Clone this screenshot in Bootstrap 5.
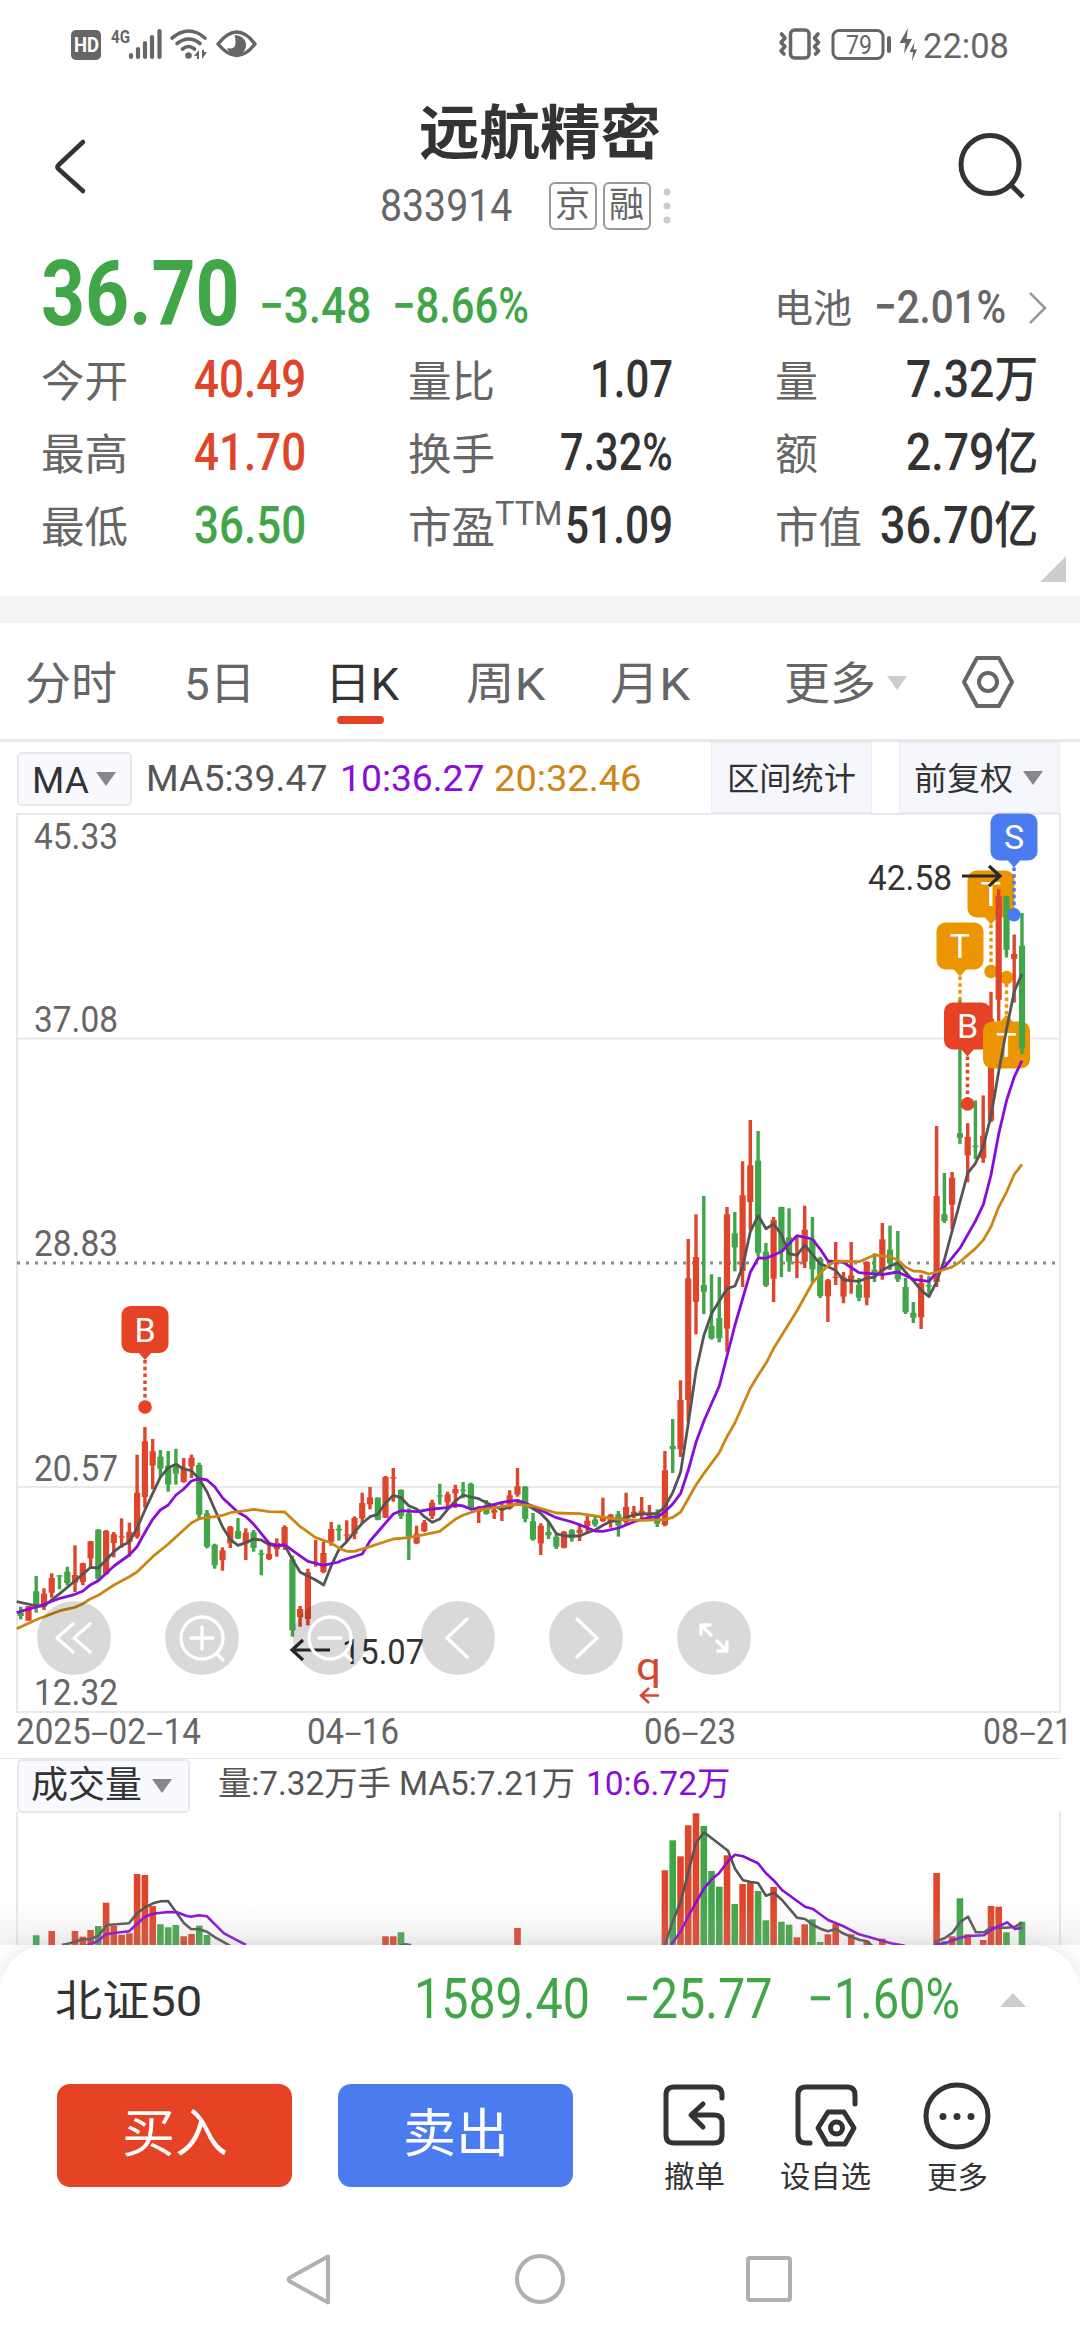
<!DOCTYPE html>
<html lang="zh-CN">
<head>
<meta charset="utf-8">
<title>远航精密 833914</title>
<link href="https://cdn.jsdelivr.net/npm/bootstrap@5.3.0/dist/css/bootstrap.min.css" rel="stylesheet">
<style>
:root{--up:#df452a;--down:#41a648;--ink:#333;--sub:#666;--violet:#8a0cd6;--gold:#cc8614}
body{width:1080px;height:2340px;overflow:hidden;background:#fff;color:var(--ink);font-family:Roboto,"Noto Sans CJK SC",sans-serif}
svg{display:block;flex:none}
svg text{font-family:Roboto,"Noto Sans CJK SC",sans-serif}
.fit{display:inline-block;white-space:nowrap;line-height:1;flex:none}
.fit>span{display:inline-block;transform-origin:0 50%}
.phone-col{height:2340px}
.status-row{height:88px;padding:15px 50px 0 60px}
.title-bar{height:162px;padding:0 50px 0 52px}
.stock-name{font-size:59px;font-weight:700;margin-left:30px}
.stock-code{font-size:44px;color:var(--sub)}
.tag-box{width:48px;height:48px;border:2px solid #999;border-radius:6px;color:var(--sub);font-size:35px}
.t-up{color:var(--up)}.t-down{color:var(--down)}.t-sub{color:var(--sub)}
.price-row{height:96px;padding:0 31px 0 41px}
.last-price{font-size:90px;font-weight:700;margin-top:-6px}
.delta{font-size:50px;font-weight:500}
.sector{font-size:39px}
.quote-grid{height:250px;padding:0 42px 0 41px;position:relative}
.quote-line{height:73px}
.q-label{font-size:43px;color:var(--sub)}
.q-val{font-size:51px;font-weight:500;margin-top:-6px}
.q-val .unit{font-size:50px}
.cell-a{width:265px}.cell-b{width:265px}.cell-c{width:263px}
.fold-tip{position:absolute;right:14px;bottom:14px}
.band{height:27px;background:#f4f4f4}
.tab-row{height:119px;padding:7px 64px 0 25px;border-bottom:3px solid #e8e8e8;font-size:45px;color:var(--sub)}
.tab-on{color:var(--ink);position:relative}
.tab-on::after{content:"";position:absolute;left:12px;bottom:-17px;width:47px;height:8px;border-radius:4px;background:#e64225}
.ma-row{height:71px;padding-left:17px;padding-right:20px;font-size:37px;background:#fff}
.ma-row .fit{padding-top:2px}
.drop-box{border:2px solid #e8e8ea;border-radius:5px;background:#f9faff;height:54px}
.flat-box{background:#f6f7fc;border:1px solid #ececf2;height:71px;font-size:32px}
.vol-head{height:54px;padding-left:17px;margin:0 20px 0 0}
.chart-stack{height:1132px}
.sheet{height:395px;border-radius:48px 48px 0 0;background:#fff;position:relative;box-shadow:0 0 22px rgba(0,0,0,.10)}
.index-row{height:110px;padding:0 54px 0 55px}
.index-row .t-down{font-size:55px;margin-top:-2px}
.act-row{height:160px;padding:0 89px 0 57px}
.btn-trade{width:235px;height:103px;border:0;border-radius:13px;color:#fff;font-size:52px;padding:0}
.btn-buy{background:#e64225}.btn-sell{background:#4a7cf0}
.tool{font-size:30px;padding-top:4px}
.nav-row{height:125px;padding-top:36px}
</style>
<script src="https://cdn.jsdelivr.net/npm/bootstrap@5.3.0/dist/js/bootstrap.bundle.min.js"></script>
</head>
<body>
<main class="phone-col d-flex flex-column">

<div class="status-row d-flex justify-content-between align-items-start">
  <svg width="210" height="60" viewBox="0 0 210 60" fill="#666">
    <rect x="11" y="15" width="30" height="30" rx="5"/>
    <text x="14" y="37" font-size="19.5" font-weight="700" fill="#fff" textLength="25" lengthAdjust="spacingAndGlyphs">HD</text>
    <text x="51" y="27.500" font-size="19" font-weight="700" textLength="19" lengthAdjust="spacingAndGlyphs">4G</text>
    <g stroke="#666" stroke-width="4.200" stroke-linecap="round"><path d="M71 40v2M78 34v8M85 28v14M92 22v20M99.500 16v26"/></g>
    <g fill="none" stroke="#666" stroke-width="3.600" stroke-linecap="round"><path d="M112 23q17-14 33 0M117 28.500q12-9 23 0M122.500 34q6-5 12 0"/></g>
    <circle cx="128.500" cy="40.500" r="3.300"/><path d="M134 41l5-6v9h-2v-3zM142 35v9l5-7h-3v-2z"/>
    <path d="M158 29q19-24 37 0q-18 23-37 0z" fill="none" stroke="#666" stroke-width="3.500" stroke-linejoin="round"/>
    <path d="M174.500 20.500a9.800 9.800 0 1 1-7.600 12.500q7.500 2 8.600-4 .5-5-1-8.500z"/>
  </svg>
  <svg width="260" height="60" viewBox="0 0 260 60" fill="#666">
    <rect x="20.500" y="15" width="18.500" height="28" rx="4" fill="none" stroke="#666" stroke-width="3.500"/>
    <path d="M11.500 19l3.500 4-4 4.500 4 4-4 4.500 3 3M48 19l-3.500 4 4 4.500-4 4 4 4.500-3 3" fill="none" stroke="#666" stroke-width="3.600" stroke-linejoin="round" stroke-linecap="round"/>
    <rect x="63" y="15.500" width="50" height="28" rx="6" fill="none" stroke="#666" stroke-width="3"/>
    <rect x="117" y="21" width="4" height="17" rx="2"/>
    <text x="76" y="38.500" font-size="25" textLength="26" lengthAdjust="spacingAndGlyphs">79</text>
    <path d="M138 13l-8.500 15h6l-1.500 11 8-15h-5.500zM144.500 27l-5 10h3.500l-1 9 5-11.500h-3.500z"/>
    <text x="153" y="42.500" font-size="35" textLength="86" lengthAdjust="spacingAndGlyphs">22:08</text>
  </svg>
</div>

<header class="title-bar d-flex align-items-start justify-content-between">
  <svg width="44" height="162" viewBox="52 88 44 162" fill="none" stroke="#333" stroke-width="4.500" stroke-linecap="round" stroke-linejoin="round"><path d="M83 142L58.500 165q-2 2 0 4L83 191"/></svg>
  <div class="d-flex flex-column align-items-center">
    <div class="stock-name fit mt-3" data-w="242"><span>远航精密</span></div>
    <div class="d-flex align-items-center" style="margin-top:19px">
      <span class="stock-code fit" data-w="132"><span>833914</span></span>
      <span class="tag-box d-flex align-items-center justify-content-center" style="margin-left:37px">京</span>
      <span class="tag-box d-flex align-items-center justify-content-center" style="margin-left:6px">融</span>
      <svg width="8" height="36" viewBox="0 0 8 36" fill="#ccc" style="margin-left:12px"><circle cx="4" cy="4" r="3.500"/><circle cx="4" cy="18" r="3.500"/><circle cx="4" cy="32" r="3.500"/></svg>
    </div>
  </div>
  <svg width="76" height="162" viewBox="954 88 76 162" fill="none" stroke="#333" stroke-width="5"><circle cx="990" cy="164.500" r="29"/><path d="M1010 184l13 13"/></svg>
</header>

<div class="price-row d-flex align-items-center">
  <span class="last-price fit t-down" data-w="199"><span>36.70</span></span>
  <span class="delta fit t-down" data-w="112" style="margin:15px 0 0 19px"><span>−3.48</span></span>
  <span class="delta fit t-down" data-w="137" style="margin:15px 0 0 21px"><span>−8.66%</span></span>
  <span class="sector fit t-sub ms-auto" data-w="78" style="margin-top:22px"><span>电池</span></span>
  <span class="delta fit t-sub" data-w="132" style="margin:16px 0 0 22px;font-size:47px"><span>−2.01%</span></span>
  <svg width="22" height="36" viewBox="0 0 22 36" fill="none" stroke="#999" stroke-width="2.500" style="margin:19px 0 0 21px"><path d="M3 3l15 15L3 33"/></svg>
</div>

<section class="quote-grid">
  <div class="quote-line d-flex justify-content-between align-items-center">
    <div class="cell-a d-flex justify-content-between align-items-center"><span class="q-label fit" data-w="87"><span>今开</span></span><span class="q-val fit t-up" data-w="112"><span>40.49</span></span></div>
    <div class="cell-b d-flex justify-content-between align-items-center"><span class="q-label fit" data-w="87"><span>量比</span></span><span class="q-val fit" data-w="83"><span>1.07</span></span></div>
    <div class="cell-c d-flex justify-content-between align-items-center"><span class="q-label fit" data-w="43"><span>量</span></span><span class="q-val fit" data-w="132"><span>7.32<span class="unit">万</span></span></span></div>
  </div>
  <div class="quote-line d-flex justify-content-between align-items-center">
    <div class="cell-a d-flex justify-content-between align-items-center"><span class="q-label fit" data-w="87"><span>最高</span></span><span class="q-val fit t-up" data-w="112"><span>41.70</span></span></div>
    <div class="cell-b d-flex justify-content-between align-items-center"><span class="q-label fit" data-w="87"><span>换手</span></span><span class="q-val fit" data-w="113"><span>7.32%</span></span></div>
    <div class="cell-c d-flex justify-content-between align-items-center"><span class="q-label fit" data-w="43"><span>额</span></span><span class="q-val fit" data-w="132"><span>2.79<span class="unit">亿</span></span></span></div>
  </div>
  <div class="quote-line d-flex justify-content-between align-items-center">
    <div class="cell-a d-flex justify-content-between align-items-center"><span class="q-label fit" data-w="87"><span>最低</span></span><span class="q-val fit t-down" data-w="112"><span>36.50</span></span></div>
    <div class="cell-b d-flex align-items-center"><span class="q-label fit" data-w="87"><span>市盈</span></span><span class="fit t-sub" data-w="68" style="font-size:34px;margin-bottom:31px"><span>TTM</span></span><span class="q-val fit ms-auto" data-w="108"><span>51.09</span></span></div>
    <div class="cell-c d-flex justify-content-between align-items-center"><span class="q-label fit" data-w="87"><span>市值</span></span><span class="q-val fit" data-w="158"><span>36.70<span class="unit">亿</span></span></span></div>
  </div>
  <svg class="fold-tip" width="26" height="26" viewBox="0 0 26 26" fill="#ccc"><path d="M26 0v26H0z"/></svg>
</section>

<div class="band"></div>

<nav class="tab-row d-flex align-items-center">
  <span class="fit" data-w="92"><span>分时</span></span>
  <span class="fit" data-w="71" style="margin-left:67px"><span>5日</span></span>
  <span class="fit tab-on" data-w="74" style="margin-left:70px"><span>日K</span></span>
  <span class="fit" data-w="79" style="margin-left:67px"><span>周K</span></span>
  <span class="fit" data-w="80" style="margin-left:65px"><span>月K</span></span>
  <span class="fit" data-w="92" style="margin-left:94px"><span>更多</span></span>
  <svg width="20" height="14" viewBox="0 0 20 14" fill="#ccc" style="margin:-3px 0 0 11px"><path d="M0 0h20l-10 14z"/></svg>
  <svg class="ms-auto" width="56" height="56" viewBox="0 0 56 56" fill="none" stroke="#666" stroke-width="4" style="margin-top:-5px"><path d="M17 4h22l13 24-13 24H17L4 28z" stroke-linejoin="round"/><circle cx="28" cy="28" r="9"/></svg>
</nav>

<div class="ma-row d-flex align-items-center">
  <div class="drop-box d-flex align-items-center" style="width:115px;padding-left:13px;margin-top:3px">
    <span class="fit" data-w="57"><span>MA</span></span>
    <svg width="20" height="14" viewBox="0 0 20 14" fill="#888" style="margin-left:7px"><path d="M0 0h20l-10 14z"/></svg>
  </div>
  <span class="fit" data-w="181" style="margin-left:14px;color:#555"><span>MA5:39.47</span></span>
  <span class="fit" data-w="144" style="margin-left:13px;color:var(--violet)"><span>10:36.27</span></span>
  <span class="fit" data-w="147" style="margin-left:10px;color:var(--gold)"><span>20:32.46</span></span>
  <div class="flat-box d-flex align-items-center justify-content-center ms-auto" style="width:161px"><span class="fit" data-w="129"><span>区间统计</span></span></div>
  <div class="flat-box d-flex align-items-center" style="width:161px;margin-left:27px;padding-left:14px"><span class="fit" data-w="99"><span>前复权</span></span>
    <svg width="20" height="14" viewBox="0 0 20 14" fill="#888" style="margin-left:10px"><path d="M0 0h20l-10 14z"/></svg></div>
</div>

<div class="chart-stack d-flex flex-column">
<svg id="kline" width="1080" height="945" viewBox="0 813 1080 945">
  <g fill="none" stroke="#e9e9e9" stroke-width="2"><rect x="17" y="814" width="1043" height="898"/><path d="M17 1038.500H1060M17 1487H1060"/></g>
  <path d="M17 1263H1060" stroke="#8c8c8c" stroke-width="3" stroke-dasharray="3 6"/>
  <g font-size="36" fill="#666">
    <text x="34" y="849" textLength="84" lengthAdjust="spacingAndGlyphs">45.33</text>
    <text x="34" y="1032" textLength="84" lengthAdjust="spacingAndGlyphs">37.08</text>
    <text x="34" y="1256" textLength="84" lengthAdjust="spacingAndGlyphs">28.83</text>
    <text x="34" y="1481" textLength="84" lengthAdjust="spacingAndGlyphs">20.57</text>
    <text x="34" y="1705" textLength="84" lengthAdjust="spacingAndGlyphs">12.32</text>
    <text x="16" y="1744" textLength="185" lengthAdjust="spacingAndGlyphs">2025‒02‒14</text>
    <text x="307" y="1744" textLength="92" lengthAdjust="spacingAndGlyphs">04‒16</text>
    <text x="644" y="1744" textLength="92" lengthAdjust="spacingAndGlyphs">06‒23</text>
    <text x="983" y="1744" textLength="89" lengthAdjust="spacingAndGlyphs">08‒21</text>
  </g>
  <g id="candlesBack"></g>
  <g id="markers" font-size="34" text-anchor="middle" fill="#fff"></g>
  <g id="candlesFront"></g>
  <g id="averages" fill="none" stroke-width="2.800" stroke-linejoin="round"></g>
  <g id="sellMarker" font-size="34" text-anchor="middle" fill="#fff"></g>
  <g fill="none" stroke="#2a2a2a" stroke-width="3.200"><path d="M962 876H999M989 866l11 10-11 10M330 1650H293M303 1640l-11 10 11 10"/></g>
  <g font-size="35" fill="#333"><text x="868" y="890" textLength="84" lengthAdjust="spacingAndGlyphs">42.58</text><text x="342" y="1664" textLength="82" lengthAdjust="spacingAndGlyphs">15.07</text></g>
  <text x="636" y="1680" font-size="39" fill="#d6472f" textLength="25" lengthAdjust="spacingAndGlyphs">q</text>
  <path d="M659 1695.500H641M649 1688l-8 7.500 8 7.500" fill="none" stroke="#d6472f" stroke-width="2.500"/>
  <g fill="#000" fill-opacity=".15"><circle cx="74" cy="1638" r="37"/><circle cx="202" cy="1638" r="37"/><circle cx="330" cy="1638" r="37"/><circle cx="458" cy="1638" r="37"/><circle cx="586" cy="1638" r="37"/><circle cx="714" cy="1638" r="37"/></g>
  <g fill="none" stroke="#fff" stroke-width="3.300" stroke-linecap="round" stroke-linejoin="round">
    <path d="M73 1624L57 1638l16 14M90 1624L74 1638l16 14"/>
    <circle cx="202" cy="1638" r="21"/><path d="M217 1654l6 6M191 1638h22M202 1627v22"/>
    <circle cx="330" cy="1638" r="21"/><path d="M345 1654l6 6M319 1638h22"/>
    <path d="M467 1619L447 1638l20 19M577 1619l20 19-20 19"/>
    <path d="M701 1634v-9h9M701 1625l10 10M727 1642v9h-9M727 1651l-10-10"/>
  </g>
</svg>

<div class="vol-head d-flex align-items-center" style="border-top:1px solid #e6e6e6">
  <div class="drop-box d-flex align-items-center" style="width:173px;padding-left:12px;font-size:37px">
    <span class="fit" data-w="111"><span>成交量</span></span>
    <svg width="20" height="14" viewBox="0 0 20 14" fill="#888" style="margin-left:10px"><path d="M0 0h20l-10 14z"/></svg>
  </div>
  <span class="fit" data-w="357" style="margin:-5px 0 0 28px;font-size:33px;color:#555"><span>量:7.32万手 MA5:7.21万</span></span>
  <span class="fit" data-w="144" style="margin:-5px 0 0 11px;font-size:33px;color:var(--violet)"><span>10:6.72万</span></span>
</div>
<svg id="volume" width="1080" height="133" viewBox="0 1812 1080 133">
  <defs><linearGradient id="fade" x1="0" y1="0" x2="0" y2="1"><stop offset="0" stop-color="#b7b7b7" stop-opacity="0"/><stop offset="1" stop-color="#b7b7b7" stop-opacity=".2"/></linearGradient></defs>
  <path d="M17 1812V1945M1060 1812V1945" stroke="#e9e9e9" stroke-width="2"/>
  <g id="volBars"></g>
  <g id="volLines" fill="none" stroke-width="2.600" stroke-linejoin="round"></g>
  <rect x="0" y="1902" width="1080" height="43" fill="url(#fade)"/>
</svg>
</div>

<section class="sheet">
  <div class="index-row d-flex align-items-center">
    <span class="fit" data-w="147" style="font-size:43px;margin-top:2px"><span>北证50</span></span>
    <span class="fit t-down ms-auto" data-w="176"><span>1589.40</span></span>
    <span class="fit t-down" data-w="150" style="margin-left:33px"><span>−25.77</span></span>
    <span class="fit t-down" data-w="153" style="margin-left:34px"><span>−1.60%</span></span>
    <svg width="26" height="14" viewBox="0 0 26 14" fill="#ccc" style="margin-left:40px"><path d="M0 14h26L13 0z"/></svg>
  </div>
  <div class="act-row d-flex align-items-center">
    <button class="btn btn-trade btn-buy"><span class="fit" data-w="106"><span>买入</span></span></button>
    <button class="btn btn-trade btn-sell" style="margin-left:46px"><span class="fit" data-w="106"><span>卖出</span></span></button>
    <div class="tool d-flex flex-column align-items-center" style="margin-left:88px">
      <svg width="66" height="66" viewBox="0 0 66 66" fill="none" stroke="#333" stroke-width="5" stroke-linecap="round" stroke-linejoin="round"><path d="M61 16v-3q0-8-8-8H13q-8 0-8 8v40q0 8 8 8h40q8 0 8-8V40q0-7-8-7H31M42 22L30 33l12 12"/></svg>
      <span class="fit" data-w="61" style="margin-top:14px"><span>撤单</span></span>
    </div>
    <div class="tool d-flex flex-column align-items-center" style="margin-left:53px">
      <svg width="66" height="66" viewBox="0 0 66 66" fill="none" stroke="#333" stroke-width="5" stroke-linecap="round" stroke-linejoin="round"><path d="M62 22v-9q0-8-8-8H13q-8 0-8 8v40q0 8 8 8h4M35 30h16l10 16-9 16H34l-9-16z"/><circle cx="43.500" cy="46" r="6"/></svg>
      <span class="fit" data-w="91" style="margin-top:14px"><span>设自选</span></span>
    </div>
    <div class="tool d-flex flex-column align-items-center ms-auto">
      <svg width="68" height="68" viewBox="0 0 68 68" fill="none" stroke="#333" stroke-width="5"><circle cx="34" cy="34" r="31"/><g fill="#333" stroke="none"><circle cx="20" cy="34.500" r="3.500"/><circle cx="34" cy="34.500" r="3.500"/><circle cx="48" cy="34.500" r="3.500"/></g></svg>
      <span class="fit" data-w="61" style="margin-top:13px"><span>更多</span></span>
    </div>
  </div>
  <div class="nav-row">
    <svg width="1080" height="56" viewBox="0 2251 1080 56" fill="none" stroke="#b0b0b0" stroke-width="4" stroke-linejoin="round"><path d="M328 2256.500v46L290 2281.500q-3-2 0-4z"/><circle cx="540" cy="2279" r="23"/><rect x="748" y="2258" width="42" height="42" rx="2"/></svg>
  </div>
</section>
</main>

<script>
const UP = '#df452a', DOWN = '#41a648', STEP = 7.762, X0 = 20.7;
const cx = i => X0 + STEP * i;
// Daily bars: direction, high, body top, body bottom, low; each block has its own origin and scale.
const blocks = [
 {y:1280, k:1/3, d:`g980 998 1008 1018|r978 978 1022 1022|g888 934 976 998|r925 941 980 990|r880 894 938 953|g886 886 890 928|g860 875 909 916|r796 885 908 936|r848 850 906 916|r783 784 835 860|g747 749 896 900|r750 753 882 885|r756 763 789 832|r715 769 772 803|r728 755 786 830|r524 638 770 776|r441 484 651 683|r477 514 557 628|g510 530 566 590|g513 557 614 635|g506 553 581 614|r534 563 606 608|r524 533 559 594|g548 555 704 716|g690 700 800 805|g791 794 856 866|r802 811 840 872|r738 740 790 804|g714 753 775 777|r745 758 790 840|g750 757 804 815|g809 820 824 886|r795 822 837 840|r775 789 808 830|r736 741 795 810|g827 838 1051 1070|r978 987 1012 1040|r866 877 1017 1036|r780 848 852 860|r785 819 876 880|r726 747 785 797|g734 746 751 782|r721 763 767 785|r709 714 762 778`},
 {y:1380, k:1/3, d:`r338 369 415 430|r321 352 373 388|g352 353 419 421|r288 291 413 414|r264 292 295 365|g328 330 408 417|g385 400 470 540|r437 461 490 492|r420 428 453 456|r359 368 408 417|g311 346 350 374|r335 343 367 382|r314 327 340 384|g306 329 333 355|g308 312 383 386|r378 384 396 429|g360 375 402 404|r375 390 398 417|r370 383 388 423|r331 346 385 389|r264 319 344 350|g318 320 416 427|g399 424 478 482|r430 437 490 525|g424 456 466 477|g462 470 500 507|r453 455 503 505|g447 451 475 485|r430 449 459 483|r407 422 438 456|g410 419 434 440|r353 413 423 426|r402 404 426 443|g393 403 437 470|r338 380 426 436|r378 395 403 414|r351 392 402 422|r375 402 408 418|g388 399 431 441|r213 271 435 439|g117 198 208 279`},
 {y:1080, k:1/3, d:`r901 960 1108 1131|r477 595 960 1026|r403 531 665 763|g348 615 635 702|g583 738 775 779|g591 714 775 787|r381 403 746 815|g396 460 502 574|r244 346 573 621|r120 256 366 450|g153 242 518 530|g489 515 616 621|r411 420 596 666|g380 381 516 591|g385 472 545 575|r470 545 549 594|r377 449 545 564|g411 478 568 606|g530 536 648 654|r597 601 649 726|r486 590 594 615|r576 592 650 670|r486 586 597 641|g594 614 653 664|r544 546 653 676|g520 569 585 606|r429 478 573 599|g437 509 550 570|g453 545 598 606|g594 621 697 702|g666 698 713 729|r584 609 712 747|g588 616 620 650|r138 348 606 621|g279 403 423 429|r276 293 374 448`},
 {y:800, k:1/2.8, d:`g560 933 946 963|r905 943 995 1070|g841 968 972 1006|r827 940 1003 1016|r537 612 898 902|r249 269 559 620|g268 270 420 441|r377 431 445 567|g316 408 696 712`}];
let n = 0, back = '', front = '';
for (const b of blocks) for (const s of b.d.split('|')) {
  const c = s[0] === 'r' ? UP : DOWN, [h, t, o, l] = s.slice(1).split(' ').map(v => b.y + v * b.k), x = cx(n);
  const g = `<path d="M${x.toFixed(1)} ${h.toFixed(1)}V${l.toFixed(1)}" stroke="${c}" stroke-width="3.400"/><rect x="${(x-3.1).toFixed(1)}" y="${t.toFixed(1)}" width="6.200" height="${Math.max(1.3,o-t).toFixed(1)}" fill="${c}"/>`;
  if (n < 126) back += g; else front += g;
  n++;
}
candlesBack.innerHTML = back; candlesFront.innerHTML = front;

// Trade markers: x, box top, dot y, colour, letter, box below the dot
const marker = (x, y, dot, c, s, below) => {
  const from = below ? y - 7 : y + 54;
  const tip = below ? `M${x-7} ${y+1}l7-8 7 8z` : `M${x-7} ${y+46}l7 8 7-8z`;
  return `<path d="M${x} ${from}V${dot}" stroke="${c}" stroke-width="3.500" stroke-dasharray="3.500 3.300"/><circle cx="${x}" cy="${dot}" r="6.800" fill="${c}"/><rect x="${x-23.500}" y="${y}" width="47" height="47" rx="9" fill="${c}"/><path d="${tip}" fill="${c}"/><text x="${x}" y="${y+35.500}">${s}</text>`;
};
markers.innerHTML = marker(145,1306,1407,'#e64225','B') + marker(960,922.5,1020,'#eb9500','T').replace(/<circle[^>]*>/,'').replace('V1020','V1003')
  + marker(967.5,1002.5,1104,'#e64225','B') + marker(991,870.5,971.5,'#eb9500','T') + marker(1006.5,1021.5,977.5,'#eb9500','T',true);
sellMarker.innerHTML = marker(1014,813.5,914.8,'#4a7cf0','S');

const toPts = (s, y, k, ox) => s.trim().split(/\s+/).map(p => { const [a, b] = p.split(',').map(Number); return (ox + a / 3).toFixed(1) + ',' + (y + b * k).toFixed(1); }).join(' ');
const averagesData = [
 ['#555', '50,965 112,978 132,978 180,940 225,903 272,862 295,864 342,815 365,797 388,786 411,745 435,690 458,640 481,592 505,563 528,553 551,567 574,572 598,597 621,635 644,688 668,742 691,778 714,796 738,788 761,777 784,780 808,794 831,798 854,796 878,840 901,877 947,900 971,915 994,857 1017,808 1040,785 1064,755',
  '67,430 90,410 113,403 136,370 160,346 183,353 206,377 230,387 253,410 277,427 299,417 323,388 346,363 370,345 393,351 416,356 439,368 463,378 486,389 509,380 533,370 556,372 579,386 602,400 626,425 649,461 673,468 719,468 742,458 765,450 789,436 812,424 836,422 859,412 882,405 905,402 952,400 975,380 998,338',
  '122,1175 145,1030 168,873 192,765 215,700 261,626 285,618 308,560 331,455 355,407 378,446 401,432 424,463 447,521 471,526 494,495 517,523 541,552 564,560 587,571 610,600 657,604 680,595 704,591 727,570 773,548 797,577 820,602 843,630 867,650 890,605 913,540',
  '337,1205 360,1125 383,1045 406,1018 430,970 453,885 476,760 500,640 523,535 546,487'],
 ['#8a0cd6', '50,998 112,980 180,955 225,943 249,933 272,914 295,902 342,858 388,825 411,800 435,757 458,718 481,690 505,675 528,645 551,627 574,603 598,596 621,600 644,620 668,654 714,697 738,710 761,733 808,790 831,797 854,794 878,812 924,844 970,856 1017,846',
  '0,543 67,522 90,483 160,402 183,392 230,395 277,387 323,383 346,375 370,378 393,388 439,380 486,367 533,361 579,379 649,413 696,426 742,443 765,453 789,454 836,444 882,425 928,412 952,411 975,395 998,372',
  '122,1240 145,1170 168,1087 192,1022 238,918 285,735 331,577 355,534 378,535 424,515 471,467 517,477 541,508 564,543 610,547 657,578 727,584 773,576 820,598 867,604 890,577 913,562',
  '360,1255 406,1180 430,1133 453,1050 476,935 500,840 523,775 546,730'],
 ['#cc8614', '50,1046 112,1018 180,992 225,982 249,971 272,956 295,946 342,915 388,890 411,876 458,830 505,792 574,729 598,716 644,710 668,706 691,698 738,692 761,688 808,695 854,696 901,740 947,773 994,789',
  '0,506 20,514 43,514 90,500 160,477 206,473 253,464 299,454 346,418 370,405 416,390 463,383 533,373 579,378 649,399 719,401 765,408 836,418 905,421 975,419 998,412',
  '122,1296 168,1215 192,1180 238,1118 261,1070 285,1028 331,925 355,885 378,850 401,805 471,692 517,610 541,580 564,557 587,543 657,545 704,525 750,530 773,540 797,562 820,573 843,574 867,582 890,576',
  '337,1307 360,1293 406,1256 430,1232 453,1195 476,1140 500,1097 523,1048 546,1020']];
averages.innerHTML = averagesData.map(([c, a, b, d, e]) => `<polyline stroke="${c}" points="${toPts(a,1280,1/3,0)} ${toPts(b,1380,1/3,340)} ${toPts(d,1080,1/3,640)} ${toPts(e,800,1/2.8,840)}"/>`).join('');

// Volume: bar index, direction, top
const vol = '2g706 4r693 7r693 8r710 9r690 10g678 11r608 12r677 13r704 14r700 15r522 16r525 17r618 18g673 19g682 20g675 21r709 22r702 23g677 24g705 47r709 48r709 49g697 64r684 83r511 84g421 85r469 86r376 87r340 88g378 89g513 90g560 91r466 92g612 93r552 94r547 95g573 96g661 97r561 98g665 99g674 100r712 101r673 102g658 103g726 104r703 105r672 107r703 109r723 111r716 118r519 119g724 120r709 121g595 122r703 124r720 125r618 126r620 127g697 129g665';
volBars.innerHTML = vol.split(' ').map(s => { const [, i, c, t] = s.match(/(\d+)([rg])(\d+)/); const y = 1700 + t / 3;
  return `<rect x="${(cx(+i)-3.3).toFixed(1)}" y="${y.toFixed(1)}" width="6.600" height="${(1946-y).toFixed(1)}" fill="${c==='r'?UP:DOWN}"/>`; }).join('');
const vl = [
 ['#555','62,735 70,730 83,718 90,718 98,708 107,675 129,670 137,640 145,622 153,610 161,604 168,603 176,636 184,670 191,687 199,688 207,695 215,712 230,737'],
 ['#8a0cd6','86,738 98,723 106,703 114,699 129,694 137,672 145,650 153,641 168,636 177,637 186,647 191,650 199,646 207,649 224,700 246,735'],
 ['#555','400,737 406,733 411,736'],
 ['#555','665,735 673,662 681,603 688,520 696,428 704,397 728,452 735,506 743,541 751,546 758,549 766,587 774,578 782,600 797,653 805,657 813,675 821,687 828,694 836,687 843,700 851,710 860,720 867,724 872,737'],
 ['#8a0cd6','671,735 681,693 688,650 704,565 712,537 719,520 728,484 735,464 743,469 758,490 766,520 774,542 782,570 805,620 813,627 828,660 843,678 859,703 891,730 905,737'],
 ['#555','934,727 945,714 953,697 960,667 968,650 976,697 984,697 991,683 1007,683 1015,680 1022,668'],
 ['#8a0cd6','934,735 948,727 960,713 969,708 984,706 991,690 1007,667 1015,687 1022,683']];
volLines.innerHTML = vl.map(([c, s]) => `<polyline stroke="${c}" points="${s.split(' ').map(p => { const [a, b] = p.split(','); return a + ',' + (1700 + b / 3).toFixed(1); }).join(' ')}"/>`).join('');

// Condense each label to its column width
function fitAll() {
  document.querySelectorAll('.fit').forEach(e => {
    const s = e.firstElementChild, w = +e.dataset.w;
    s.style.transform = 'none'; e.style.width = 'auto';
    const r = s.offsetWidth;
    e.style.width = w + 'px'; s.style.transform = `scaleX(${w / r})`;
  });
}
fitAll();
document.fonts.ready.then(fitAll);
</script>
</body>
</html>
